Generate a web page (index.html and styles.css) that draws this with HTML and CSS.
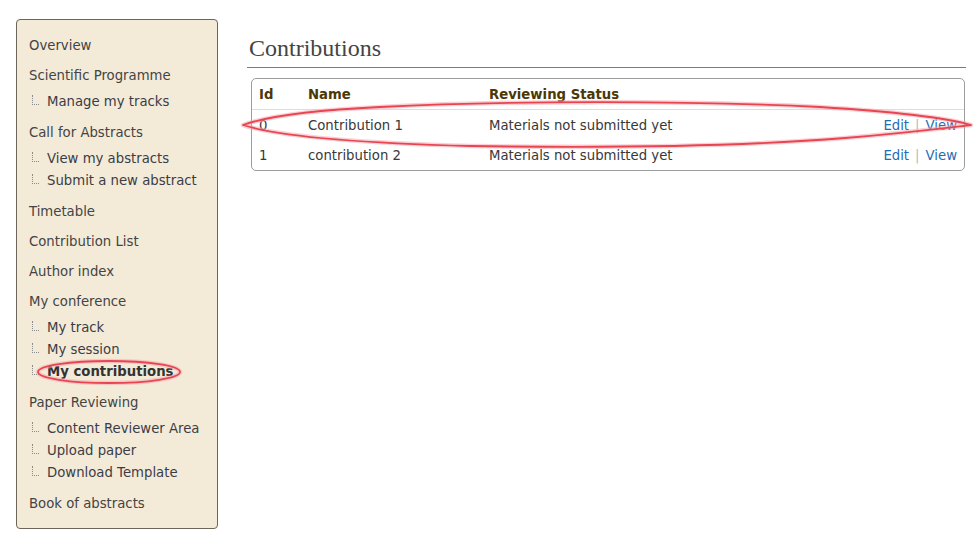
FILE: index.html
```html
<!DOCTYPE html>
<html>
<head>
<meta charset="utf-8">
<link rel="stylesheet" href="styles.css">
</head>
<body>
<div class="page">
  <nav class="sidebar">
    <div class="sec"><div class="top">Overview</div></div>
    <div class="sec"><div class="top">Scientific Programme</div>
      <ul class="subs"><li>Manage my tracks</li></ul></div>
    <div class="sec"><div class="top">Call for Abstracts</div>
      <ul class="subs"><li>View my abstracts</li><li>Submit a new abstract</li></ul></div>
    <div class="sec"><div class="top">Timetable</div></div>
    <div class="sec"><div class="top">Contribution List</div></div>
    <div class="sec"><div class="top">Author index</div></div>
    <div class="sec"><div class="top">My conference</div>
      <ul class="subs"><li>My track</li><li>My session</li><li class="active">My contributions</li></ul></div>
    <div class="sec"><div class="top">Paper Reviewing</div>
      <ul class="subs"><li>Content Reviewer Area</li><li>Upload paper</li><li>Download Template</li></ul></div>
    <div class="sec"><div class="top">Book of abstracts</div></div>
  </nav>
  <main class="main">
    <h1 class="title">Contributions</h1>
    <div class="tablebox">
      <table class="tbl">
        <thead>
          <tr><th class="c-id">Id</th><th class="c-name">Name</th><th class="c-status">Reviewing Status</th><th class="c-act"></th></tr>
        </thead>
        <tbody>
          <tr><td>0</td><td>Contribution 1</td><td>Materials not submitted yet</td><td class="c-act"><a>Edit</a><span class="sep">|</span><a>View</a></td></tr>
          <tr><td>1</td><td>contribution 2</td><td>Materials not submitted yet</td><td class="c-act"><a>Edit</a><span class="sep">|</span><a>View</a></td></tr>
        </tbody>
      </table>
    </div>
  </main>
</div>
<svg class="marks" width="979" height="538" viewBox="0 0 979 538">
  <g fill="none" stroke-linecap="round" stroke-linejoin="round">
    <g stroke="#f6aab1" stroke-width="4.5" opacity="0.55">
      <path d="M243 125 C 262 118, 300 111, 380 107 C 500 101, 680 100, 820 107 C 900 112, 950 119, 971 125 C 945 128, 905 133, 845 138 C 745 146, 600 148, 470 146 C 360 143, 280 137, 243 125 Z"/>
      <ellipse cx="109" cy="372" rx="71" ry="11"/>
    </g>
    <g stroke="#e84552" stroke-width="1.8">
      <path d="M243 125 C 262 118, 300 111, 380 107 C 500 101, 680 100, 820 107 C 900 112, 950 119, 971 125 C 945 128, 905 133, 845 138 C 745 146, 600 148, 470 146 C 360 143, 280 137, 243 125 Z"/>
      <ellipse cx="109" cy="372" rx="71" ry="11"/>
    </g>
  </g>
</svg>
</body>
</html>
```
FILE: styles.css
```css
html, body {
  margin: 0;
  padding: 0;
  background: #ffffff;
}
body {
  font-family: "DejaVu Sans", Verdana, sans-serif;
  font-size: 13.25px;
  color: #444444;
  width: 979px;
  height: 538px;
  overflow: hidden;
  position: relative;
}
.page {
  display: flex;
  align-items: flex-start;
  padding: 19px 0 0 16px;
}
.sidebar {
  box-sizing: border-box;
  width: 202px;
  height: 510px;
  background: #f3ebd8;
  border: 1px solid #6b655c;
  border-radius: 4px;
  padding: 16px 0 14px 12px;
  display: flex;
  flex-direction: column;
  gap: 10px;
  flex-shrink: 0;
}
.top {
  line-height: 20px;
  height: 20px;
  color: #444444;
  white-space: nowrap;
}
.subs {
  list-style: none;
  margin: 5px 0 0 0;
  padding: 0;
}
.subs li {
  position: relative;
  line-height: 22px;
  height: 22px;
  padding-left: 18px;
  color: #3c3c46;
  white-space: nowrap;
}
.subs li::before {
  content: "";
  position: absolute;
  left: 3px;
  top: 4px;
  width: 6px;
  height: 9px;
  border-left: 1px dotted #8a8a8a;
  border-bottom: 1px dotted #8a8a8a;
}
.subs li.active {
  font-weight: bold;
  color: #333333;
}
.main {
  margin-left: 29px;
  width: 719px;
  display: flex;
  flex-direction: column;
}
.title {
  margin: 16px 0 0 0;
  padding: 0 0 5px 2px;
  font-family: "Liberation Serif", "Times New Roman", serif;
  font-weight: normal;
  font-size: 24px;
  line-height: 27px;
  color: #444444;
  border-bottom: 1px solid #7a7a7a;
}
.tablebox {
  margin: 10px 1px 0 4px;
  border: 1px solid #9c9c9c;
  border-radius: 5px;
}
.tbl {
  width: 100%;
  border-collapse: collapse;
  font-size: 13.25px;
}
.tbl th {
  text-align: left;
  font-weight: bold;
  color: #4a3806;
  height: 30px;
  padding: 0 7px;
  border-bottom: 1px solid #dddddd;
  white-space: nowrap;
}
.tbl td {
  height: 30px;
  padding: 0 7px;
  color: #383838;
  white-space: nowrap;
}
.tbl .c-id { width: 35px; }
.tbl .c-name { width: 167px; }
.tbl .c-act { text-align: right; }
.tbl a {
  color: #1f6cb4;
  text-decoration: none;
}
.sep {
  color: #b8b8b8;
  margin: 0 6px;
}
.marks {
  position: absolute;
  left: 0;
  top: 0;
  pointer-events: none;
}
```
